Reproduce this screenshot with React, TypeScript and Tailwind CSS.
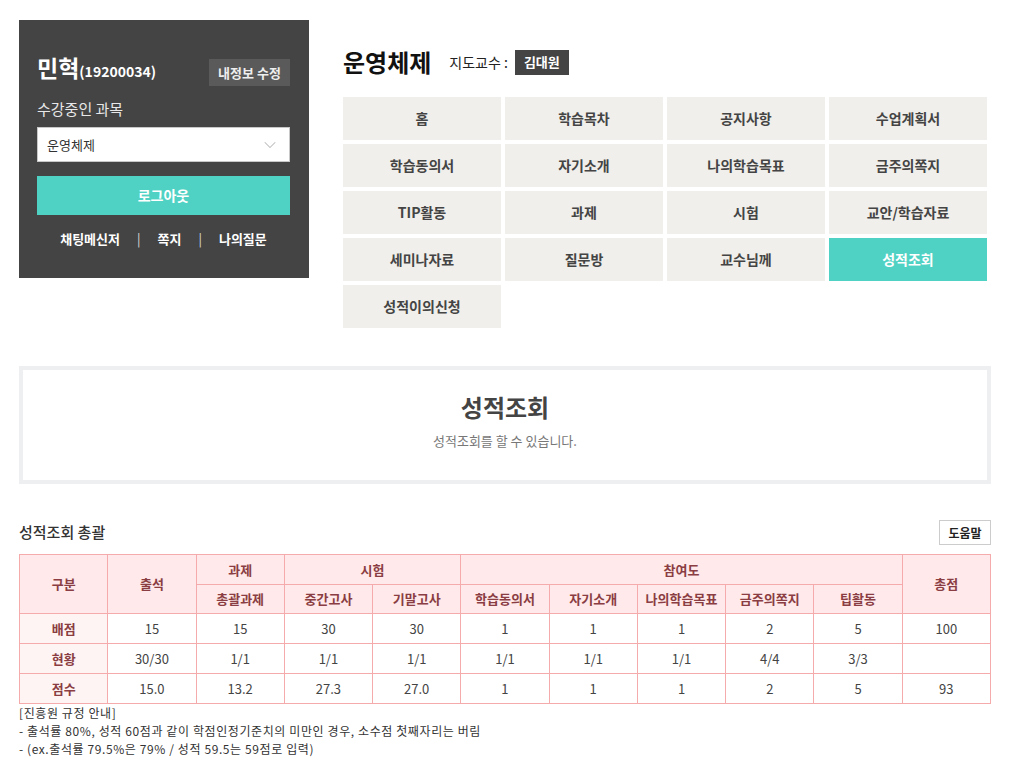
import React from "react";
import { ChevronDown } from "lucide-react";

const font = { fontFamily: '"Noto Sans CJK KR", "Noto Sans", sans-serif' };

const navItems = [
  "홈", "학습목차", "공지사항", "수업계획서",
  "학습동의서", "자기소개", "나의학습목표", "금주의쪽지",
  "TIP활동", "과제", "시험", "교안/학습자료",
  "세미나자료", "질문방", "교수님께", "성적조회",
  "성적이의신청",
];

const rows = [
  { label: "배점", vals: ["15", "15", "30", "30", "1", "1", "1", "2", "5", "100"] },
  { label: "현황", vals: ["30/30", "1/1", "1/1", "1/1", "1/1", "1/1", "1/1", "4/4", "3/3", ""] },
  { label: "점수", vals: ["15.0", "13.2", "27.3", "27.0", "1", "1", "1", "2", "5", "93"] },
];

const th = "border border-[#f5aaac] bg-[#ffe9ea] text-[#8a3d42] font-semibold text-[13px] text-center";
const td = "border border-[#f5aaac] text-[#444] text-[13px] text-center h-[30px]";

export default function App() {
  return (
    <div style={font} className="w-[1010px] min-h-[764px] bg-white px-[19px] pt-[20px] text-[#333]">
      {/* Top */}
      <div className="flex">
        <div className="w-[290px] h-[258px] bg-[#444444] pt-[33px] pl-[18px] pr-[19px]">
          <div className="flex justify-between items-start">
            <div className="flex items-baseline text-white leading-[28px]">
              <span className="text-[23px] font-bold">민혁</span>
              <span className="text-[14px] font-semibold">(19200034)</span>
            </div>
            <button className="mt-[6px] h-[27px] w-[81px] bg-[#5a5a5a] text-[#eeeeee] text-[13px] font-semibold">
              내정보 수정
            </button>
          </div>
          <div className="mt-[13px] text-[15px] leading-[20px] text-[#e8e8e8]">수강중인 과목</div>
          <div className="mt-[8px] h-[35px] bg-white border border-[#c8c8c8] flex items-center justify-between pl-[9px] pr-[9px]">
            <span className="text-[13px] text-[#333]">운영체제</span>
            <ChevronDown size={20} strokeWidth={1.25} color="#bbbbbb" />
          </div>
          <button className="mt-[14px] w-full h-[39px] bg-[#4fd2c3] text-white text-[14px] font-semibold">
            로그아웃
          </button>
          <div className="mt-[15px] flex items-center justify-center text-white text-[13px] font-semibold leading-[18px]">
            <span>채팅메신저</span>
            <span className="mx-[17px] font-normal text-[#dddddd]">|</span>
            <span>쪽지</span>
            <span className="mx-[17px] font-normal text-[#dddddd]">|</span>
            <span>나의질문</span>
          </div>
        </div>

        <div className="ml-[34px] w-[644px]">
          <div className="mt-[27px] h-[30px] flex items-center">
            <span className="text-[24px] font-bold text-[#111] leading-[30px]">운영체제</span>
            <span className="ml-[18px] text-[14px] text-[#222]">지도교수 :</span>
            <span className="ml-[7px] h-[25px] px-[9px] bg-[#444] text-white text-[13px] font-semibold flex items-center">
              김대원
            </span>
          </div>
          <div className="mt-[20px] grid grid-cols-4 gap-[4px]">
            {navItems.map((n) => {
              const active = n === "성적조회";
              return (
                <div
                  key={n}
                  className={
                    active
                      ? "h-[43px] flex items-center justify-center bg-[#4fd2c3] text-white text-[14px] font-semibold"
                      : "h-[43px] flex items-center justify-center bg-[#f0efeb] text-[#444] text-[14px] font-semibold"
                  }
                >
                  {n}
                </div>
              );
            })}
          </div>
        </div>
      </div>

      {/* Banner */}
      <div className="mt-[38px] h-[118px] border-[4px] border-[#eeeff1] flex flex-col items-center pt-[21px]">
        <div className="text-[24px] font-bold text-[#444] leading-[32px]">성적조회</div>
        <div className="mt-[9px] text-[13px] text-[#777] leading-[18px]">성적조회를 할 수 있습니다.</div>
      </div>

      {/* Section header */}
      <div className="mt-[36px] h-[25px] flex items-center justify-between">
        <span className="text-[15px] font-medium text-[#333]">성적조회 총괄</span>
        <button className="h-[25px] w-[52px] border border-[#cccccc] bg-white text-[12px] font-semibold text-[#222]">
          도움말
        </button>
      </div>

      {/* Table */}
      <table className="mt-[9px] w-full table-fixed border-collapse">
        <thead>
          <tr className="h-[30px]">
            <th rowSpan={2} className={th}>구분</th>
            <th rowSpan={2} className={th}>출석</th>
            <th className={th}>과제</th>
            <th colSpan={2} className={th}>시험</th>
            <th colSpan={5} className={th}>참여도</th>
            <th rowSpan={2} className={th}>총점</th>
          </tr>
          <tr className="h-[29px]">
            {["총괄과제", "중간고사", "기말고사", "학습동의서", "자기소개", "나의학습목표", "금주의쪽지", "팁활동"].map((h) => (
              <th key={h} className={th}>{h}</th>
            ))}
          </tr>
        </thead>
        <tbody>
          {rows.map((r) => (
            <tr key={r.label}>
              <td className="border border-[#f5aaac] bg-[#fff4f4] text-[#8a3d42] font-semibold text-[13px] text-center h-[30px]">
                {r.label}
              </td>
              {r.vals.map((v, i) => (
                <td key={i} className={td}>{v}</td>
              ))}
            </tr>
          ))}
        </tbody>
      </table>

      <div className="text-[12px] leading-[18px] tracking-[0.6px] text-[#333]">
        <div>[진흥원 규정 안내]</div>
        <div>- 출석률 80%, 성적 60점과 같이 학점인정기준치의 미만인 경우, 소수점 첫째자리는 버림</div>
        <div>- (ex.출석률 79.5%은 79% / 성적 59.5는 59점로 입력)</div>
      </div>
    </div>
  );
}
